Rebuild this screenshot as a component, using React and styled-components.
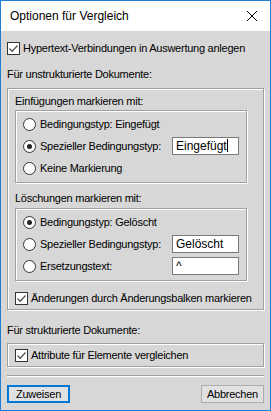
import React from "react";
import styled, { createGlobalStyle } from "styled-components";

const Global = createGlobalStyle`
  html, body { margin: 0; padding: 0; background: #fff; }
  * { box-sizing: border-box; }
`;

const Window = styled.div`
  width: 271px;
  height: 411px;
  border: 1px solid #1c7fd4;
  display: flex;
  flex-direction: column;
  font-family: "Liberation Sans", Arial, sans-serif;
  font-size: 11px;
  color: #000;
`;

const TitleBar = styled.div`
  height: 30px;
  background: #fff;
  display: flex;
  align-items: center;
  justify-content: space-between;
  padding: 0 12px 0 9px;
  font-size: 12px;
`;

const Body = styled.div`
  flex: 1;
  background: #d7d7d7;
  padding: 9px 6px 0 6px;
  display: flex;
  flex-direction: column;
  letter-spacing: -0.25px;
`;

const Label = styled.div`
  height: 14px;
  line-height: 14px;
  margin-top: ${(p) => p.$mt || 0}px;
`;

const Group = styled.div`
  border: 1px solid #a0a0a0;
  box-shadow: inset 1px 1px 0 #fff, 1px 1px 0 #fff;
  margin-top: ${(p) => p.$mt || 0}px;
  margin-right: ${(p) => p.$mr || 0}px;
  padding: ${(p) => p.$pad || "0"};
  display: flex;
  flex-direction: column;
`;

const Row = styled.label`
  display: flex;
  align-items: center;
  height: ${(p) => p.$h || 22}px;
  margin-top: ${(p) => p.$mt || 0}px;
  gap: ${(p) => p.$gap || 4}px;
`;

const Box = styled.span`
  width: 13px;
  height: 13px;
  background: #fff;
  border: 1px solid #333;
  display: inline-flex;
  align-items: center;
  justify-content: center;
  flex: none;
`;

const Radio = styled.span`
  width: 13px;
  height: 13px;
  border-radius: 50%;
  background: #fff;
  border: 1px solid #333;
  display: inline-flex;
  align-items: center;
  justify-content: center;
  flex: none;
  &::after {
    content: "";
    width: 5px;
    height: 5px;
    border-radius: 50%;
    background: ${(p) => (p.$on ? "#222" : "transparent")};
  }
`;

const Text = styled.span`
  flex: 1;
  min-width: 0;
  white-space: nowrap;
`;

const Input = styled.div`
  width: 67px;
  height: 18px;
  flex: none;
  background: #fff;
  border: 1px solid #7a7a7a;
  padding-left: 3px;
  line-height: 16px;
  margin-right: 7px;
  white-space: nowrap;
  font-size: 12px;
  letter-spacing: 0;
`;

const Caret = styled.span`
  display: inline-block;
  width: 1px;
  height: 13px;
  background: #000;
  vertical-align: -2px;
`;

const Separator = styled.div`
  height: 2px;
  border-top: 1px solid #a0a0a0;
  border-bottom: 1px solid #fff;
  margin-top: 8px;
`;

const Buttons = styled.div`
  display: flex;
  justify-content: space-between;
  margin-top: 8px;
`;

const Button = styled.button`
  width: 63px;
  height: 18px;
  padding: 0;
  font-family: inherit;
  font-size: 11px;
  letter-spacing: inherit;
  color: #000;
  background: #e1e1e1;
  border: ${(p) => (p.$primary ? "2px solid #0078d7" : "1px solid #adadad")};
`;

const Check = () => (
  <Box>
    <svg width="11" height="11" viewBox="0 0 11 11">
      <path d="M1.5 5.5 L4.2 8.2 L9.5 2.5" fill="none" stroke="#555" strokeWidth="1.3" />
    </svg>
  </Box>
);

const Close = () => (
  <svg width="12" height="12" viewBox="0 0 12 12">
    <path d="M1 1 L11 11 M11 1 L1 11" stroke="#000" strokeWidth="1" />
  </svg>
);

function RadioRow({ on, text, value, caret }) {
  return (
    <Row>
      <Radio $on={on} />
      <Text>{text}</Text>
      {value !== undefined && (
        <Input>
          {value}
          {caret && <Caret />}
        </Input>
      )}
    </Row>
  );
}

export default function App() {
  return (
    <>
      <Global />
      <Window>
        <TitleBar>
          <span>Optionen für Vergleich</span>
          <Close />
        </TitleBar>
        <Body>
          <Row $h={16} $gap={3}>
            <Check />
            <Text>Hypertext-Verbindungen in Auswertung anlegen</Text>
          </Row>
          <Label $mt={11}>Für unstrukturierte Dokumente:</Label>
          <Group $mt={7} $pad="5px 0 2px 7px">
            <Label>Einfügungen markieren mit:</Label>
            <Group $mt={2} $mr={16} $pad="2px 0 3px 7px">
              <RadioRow text="Bedingungstyp: Eingefügt" />
              <RadioRow on text="Spezieller Bedingungstyp:" value="Eingefügt" caret />
              <RadioRow text="Keine Markierung" />
            </Group>
            <Label $mt={8}>Löschungen markieren mit:</Label>
            <Group $mt={3} $mr={16} $pad="2px 0 3px 7px">
              <RadioRow on text="Bedingungstyp: Gelöscht" />
              <RadioRow text="Spezieller Bedingungstyp:" value="Gelöscht" />
              <RadioRow text="Ersetzungstext:" value="^" />
            </Group>
            <Row $h={18} $mt={8} $gap={3}>
              <Check />
              <Text>Änderungen durch Änderungsbalken markieren</Text>
            </Row>
          </Group>
          <Label $mt={13}>Für strukturierte Dokumente:</Label>
          <Group $mt={6} $pad="2px 0 2px 7px">
            <Row $h={18} $gap={3}>
              <Check />
              <Text>Attribute für Elemente vergleichen</Text>
            </Row>
          </Group>
          <Separator />
          <Buttons>
            <Button $primary>Zuweisen</Button>
            <Button>Abbrechen</Button>
          </Buttons>
        </Body>
      </Window>
    </>
  );
}
